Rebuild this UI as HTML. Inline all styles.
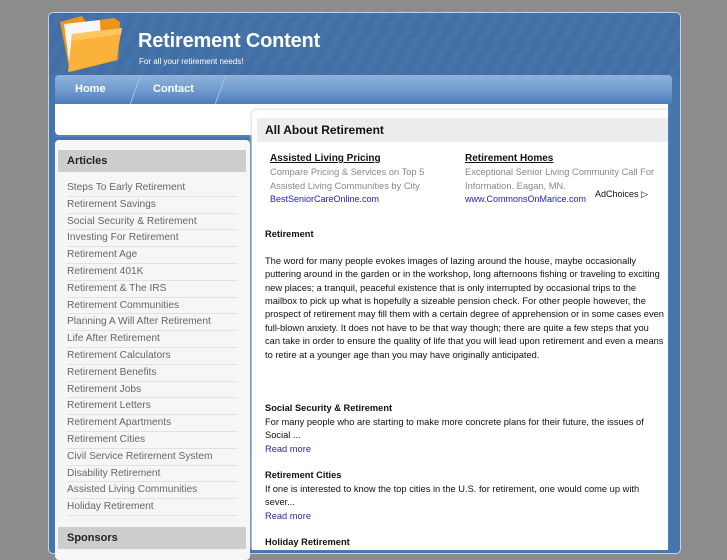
<!DOCTYPE html>
<html><head><style>
body{margin:0;width:727px;height:545px;overflow:hidden;background:#8c8c8c;font-family:"Liberation Sans",sans-serif;position:relative}
.abs{position:absolute}
#wrap{left:48px;top:12px;width:631px;height:540px;background:#4575ad;border:1px solid #c8d4e2;border-radius:5px}
#hdr{left:49px;top:13px;width:631px;height:62px;background:repeating-linear-gradient(120deg,#416fa5 0 7px,#4673a8 7px 14px);border-radius:5px 5px 0 0}
#nav{left:55px;top:75px;width:617px;height:29px;background:linear-gradient(#8fb3dc,#6f9acd 55%,#4a7dbc);border-radius:4px 4px 0 0}
#nav span{position:absolute;top:8px;color:#fff;font-weight:bold;font-size:11px}
.sep{position:absolute;top:0;width:1px;height:29px;background:#a9c2e0;transform:skewX(-20deg)}
#band{left:55px;top:104px;width:613px;height:31px;background:#fff;border-radius:0 0 4px 4px}
#side{left:55px;top:140px;width:195px;height:420px;background:#f6f6f6;border-radius:4px}
#sh{left:58px;top:150px;width:188px;height:22px;background:#cdcdcd}
.sh{font-weight:bold;font-size:11px;color:#222;padding:5px 0 0 9px}
#list{left:67px;top:180px;width:171px}
#list div{font-size:10.2px;color:#666;height:15.8px;line-height:15px;border-bottom:1px solid #e2e2e2}
#main{left:252px;top:110px;width:416px;height:440px;background:#fff;border-radius:5px 0 0 0;box-shadow:-1px -1px 2px #ddd}
#mh{left:257px;top:118px;width:411px;height:24px;background:#ededed}
.t{font-size:9.3px;color:#111;line-height:13.4px}
a{color:#2a2a9a;text-decoration:none}
</style></head><body>
<div id="wrap" class="abs"></div>
<div id="hdr" class="abs"></div>
<svg class="abs" style="left:56px;top:14px" width="70" height="60" viewBox="0 0 70 60"><path d="M4 8 L26 2 L30 8 L58 4 L64 8 L62 46 L14 58 Z" fill="#f09416"/><path d="M8 10 L44 6 L46 48 L14 56 Z" fill="#f7f7f7"/><path d="M16 20 L66 14 L60 46 L12 58 Z" fill="#fbb23a"/><path d="M16 20 L66 14 L65 20 L15 27 Z" fill="#fcc760"/></svg>
<div class="abs" style="left:138px;top:30px;color:#fff;font-size:20px;font-weight:bold;letter-spacing:-0.2px">Retirement Content</div>
<div class="abs" style="left:139px;top:57px;color:#fff;font-size:8px">For all your retirement needs!</div>
<div id="nav" class="abs"><span style="left:20px">Home</span><div class="sep" style="left:80px"></div><span style="left:98px">Contact</span><div class="sep" style="left:165px"></div></div>
<div id="band" class="abs"></div>
<div class="abs" style="left:55px;top:135px;width:200px;height:2px;background:#4f82c0"></div>
<div id="side" class="abs"></div>
<div id="sh" class="abs"><div class="sh">Articles</div></div>
<div id="list" class="abs">
<div>Steps To Early Retirement</div><div>Retirement Savings</div><div>Social Security &amp; Retirement</div><div>Investing For Retirement</div><div>Retirement Age</div><div>Retirement 401K</div><div>Retirement &amp; The IRS</div><div>Retirement Communities</div><div>Planning A Will After Retirement</div><div>Life After Retirement</div><div>Retirement Calculators</div><div>Retirement Benefits</div><div>Retirement Jobs</div><div>Retirement Letters</div><div>Retirement Apartments</div><div>Retirement Cities</div><div>Civil Service Retirement System</div><div>Disability Retirement</div><div>Assisted Living Communities</div><div>Holiday Retirement</div>
</div>
<div class="abs" style="left:58px;top:527px;width:188px;height:22px;background:#cdcdcd"><div class="sh">Sponsors</div></div>
<div id="main" class="abs"></div>
<div id="mh" class="abs"><div style="font-weight:bold;font-size:12px;padding:5px 0 0 8px;color:#111">All About Retirement</div></div>
<div class="abs" style="left:270px;top:153px;font-size:10px;font-weight:bold;text-decoration:underline;color:#111">Assisted Living Pricing</div>
<div class="abs" style="left:270px;top:166px;font-size:9.3px;color:#888;line-height:13.5px">Compare Pricing &amp; Services on Top 5<br>Assisted Living Communities by City</div>
<div class="abs" style="left:270px;top:194px;font-size:9px;color:#22c;height:9px;overflow:hidden">BestSeniorCareOnline.com</div>
<div class="abs" style="left:465px;top:153px;font-size:10px;font-weight:bold;text-decoration:underline;color:#111">Retirement Homes</div>
<div class="abs" style="left:465px;top:166px;font-size:9.3px;color:#888;line-height:13.5px">Exceptional Senior Living Community Call For<br>Information. Eagan, MN.</div>
<div class="abs" style="left:465px;top:194px;font-size:9px;color:#22c;height:9px;overflow:hidden">www.CommonsOnMarice.com</div>
<div class="abs" style="left:595px;top:189px;font-size:9px;color:#111">AdChoices ▷</div>
<div class="abs t" style="left:265px;top:228px;width:400px">
<b>Retirement</b><br><br>
The word for many people evokes images of lazing around the house, maybe occasionally puttering around in the garden or in the workshop, long afternoons fishing or traveling to exciting new places; a tranquil, peaceful existence that is only interrupted by occasional trips to the mailbox to pick up what is hopefully a sizeable pension check. For other people however, the prospect of retirement may fill them with a certain degree of apprehension or in some cases even full-blown anxiety. It does not have to be that way though; there are quite a few steps that you can take in order to ensure the quality of life that you will lead upon retirement and even a means to retire at a younger age than you may have originally anticipated.<br><br><br><br>
<b>Social Security &amp; Retirement</b><br>For many people who are starting to make more concrete plans for their future, the issues of Social ...<br><a>Read more</a><br><br>
<b>Retirement Cities</b><br>If one is interested to know the top cities in the U.S. for retirement, one would come up with sever...<br><a>Read more</a><br><br>
<b>Holiday Retirement</b>
</div>
</body></html>
